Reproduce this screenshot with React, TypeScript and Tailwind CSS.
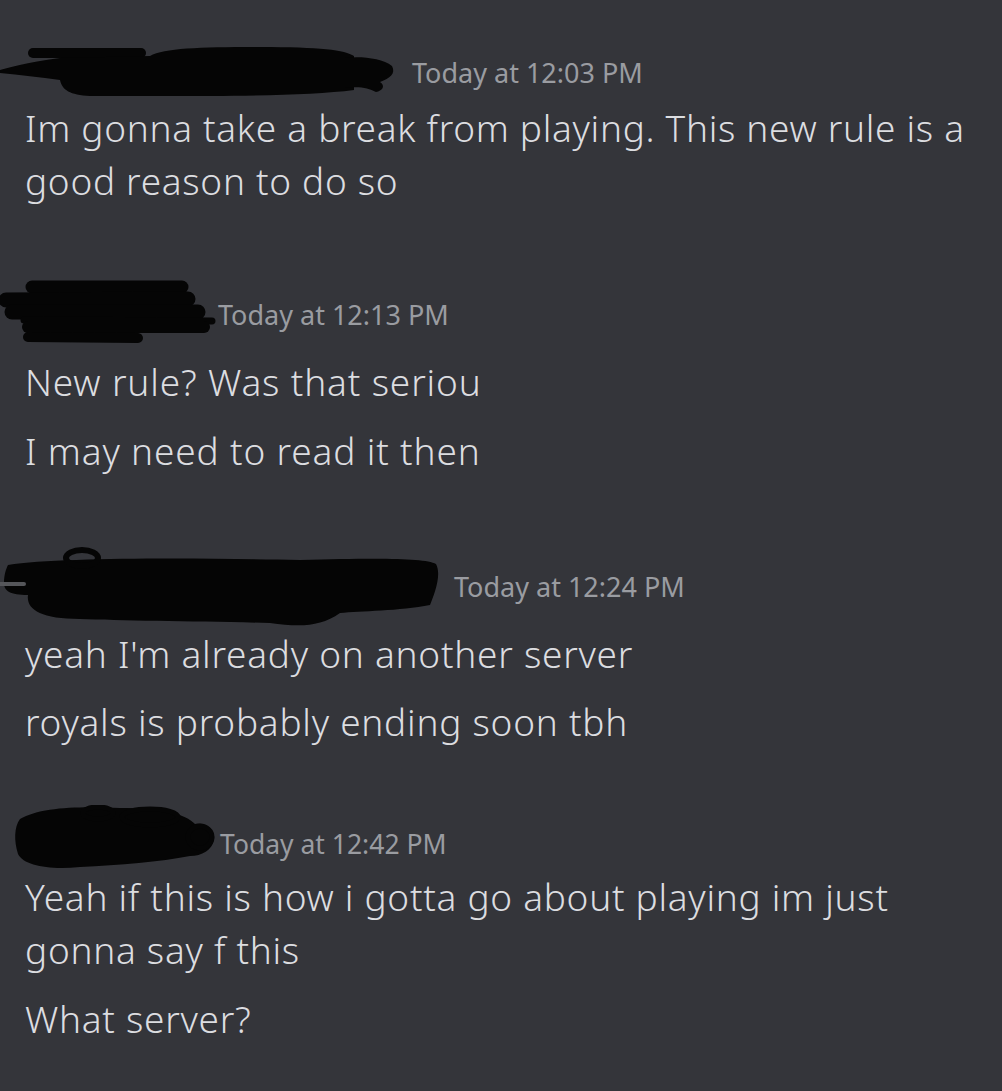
import React from 'react'

const ink = '#050505'

function ScribbleOne() {
    return (
        <svg width="412" height="52" viewBox="0 0 412 52" className="shrink-0">
            <rect x="28" y="2" width="118" height="10" rx="5" fill={ink} />
            <path d="M0 24 C15 20 30 16 60 12 L150 10 C165 2 200 1 260 1 C320 1 345 4 354 10 L354 44 C300 51 200 50 90 50 C70 49 62 44 60 34 C40 31 20 29 0 27 Z" fill={ink} />
            <path d="M345 12 C360 10 382 12 392 20 C396 28 390 32 380 36 C386 40 382 45 376 46 C368 42 360 40 345 42 Z" fill={ink} />
        </svg>
    )
}

function ScribbleTwo() {
    return (
        <svg width="218" height="74" viewBox="0 0 218 74" className="shrink-0">
            <g stroke={ink} strokeLinecap="round" fill="none">
                <path d="M32 10 L182 10" strokeWidth="13" />
                <path d="M6 23 L188 22" strokeWidth="15" />
                <path d="M12 35 L198 35" strokeWidth="15" />
                <path d="M24 43 L212 44" strokeWidth="7" />
                <path d="M28 50 L204 50" strokeWidth="12" />
                <path d="M28 60 L138 61" strokeWidth="10" />
            </g>
        </svg>
    )
}

function ScribbleThree() {
    return (
        <svg width="454" height="82" viewBox="0 0 454 82" className="shrink-0">
            <g fill={ink}>
                <path d="M8 20 C60 12 200 13 300 15 C380 13 425 13 436 19 C442 30 434 50 430 60 C400 66 360 66 340 68 C320 82 300 82 270 78 C200 76 120 76 80 74 C40 74 26 64 28 50 C10 50 4 46 4 38 C4 30 6 24 8 20 Z" />
                <ellipse cx="82" cy="13" rx="16" ry="8" fill="none" stroke={ink} strokeWidth="6" />
                <path d="M0 39 L24 39" stroke="#55565a" strokeWidth="4" strokeLinecap="round" />
            </g>
        </svg>
    )
}

function ScribbleFour() {
    return (
        <svg width="220" height="78" viewBox="0 0 220 78" className="shrink-0">
            <g fill={ink}>
                <path d="M20 14 C40 2 80 1 120 3 C160 3 186 9 195 19 C207 17 216 26 214 35 C212 45 202 51 190 51 C160 57 120 60 80 62 C50 65 24 61 18 49 C14 36 14 22 20 14 Z" />
                <g fill="none" stroke={ink} strokeWidth="5">
                    <ellipse cx="98" cy="8" rx="15" ry="6" />
                    <ellipse cx="150" cy="12" rx="28" ry="8" />
                    <ellipse cx="200" cy="32" rx="12" ry="11" />
                </g>
            </g>
        </svg>
    )
}

function Header({ scribble, time, narrow = false }: { scribble: React.ReactNode; time: string; narrow?: boolean }) {
    return (
        <div className="flex h-12 items-center">
            {scribble}
            <span className={`whitespace-nowrap leading-none text-[#9a9ca1] ${narrow ? 'text-[26.5px]' : 'text-[27px]'}`}>{time}</span>
        </div>
    )
}

function Line({ children, tracking = 'tracking-[0.75px]' }: { children: React.ReactNode; tracking?: string }) {
    return <p className={`pl-[25px] pr-[30px] text-[37px] font-light leading-[53px] text-[#dcdde0] ${tracking}`}>{children}</p>
}

export default function App() {
    return (
        <div className="h-[1091px] w-[1002px] overflow-hidden bg-[#34353a] pt-[48px]" style={{ fontFamily: '"Noto Sans", "Open Sans", sans-serif' }}>
            <div>
                <Header scribble={<ScribbleOne />} time="Today at 12:03 PM" />
                <div className="mt-[5px]">
                    <Line tracking="tracking-[0.7px]">Im gonna take a break from playing. This new rule is a good reason to do so</Line>
                </div>
            </div>

            <div className="mt-[83px]">
                <Header scribble={<ScribbleTwo />} time="Today at 12:13 PM" />
                <div className="mt-[17px] flex flex-col gap-4">
                    <Line tracking="tracking-[0.85px]">New rule? Was that seriou</Line>
                    <Line tracking="tracking-[0.85px]">I may need to read it then</Line>
                </div>
            </div>

            <div className="mt-[85px]">
                <Header scribble={<ScribbleThree />} time="Today at 12:24 PM" />
                <div className="mt-[17px] flex flex-col gap-[15px]">
                    <Line>yeah I'm already on another server</Line>
                    <Line>royals is probably ending soon tbh</Line>
                </div>
            </div>

            <div className="mt-[72px]">
                <Header scribble={<ScribbleFour />} time="Today at 12:42 PM" narrow />
                <div className="mt-[2px] flex flex-col gap-4">
                    <Line tracking="tracking-[0.72px]">Yeah if this is how i gotta go about playing im just gonna say f this</Line>
                    <Line tracking="tracking-[0.72px]">What server?</Line>
                </div>
            </div>
        </div>
    )
}
